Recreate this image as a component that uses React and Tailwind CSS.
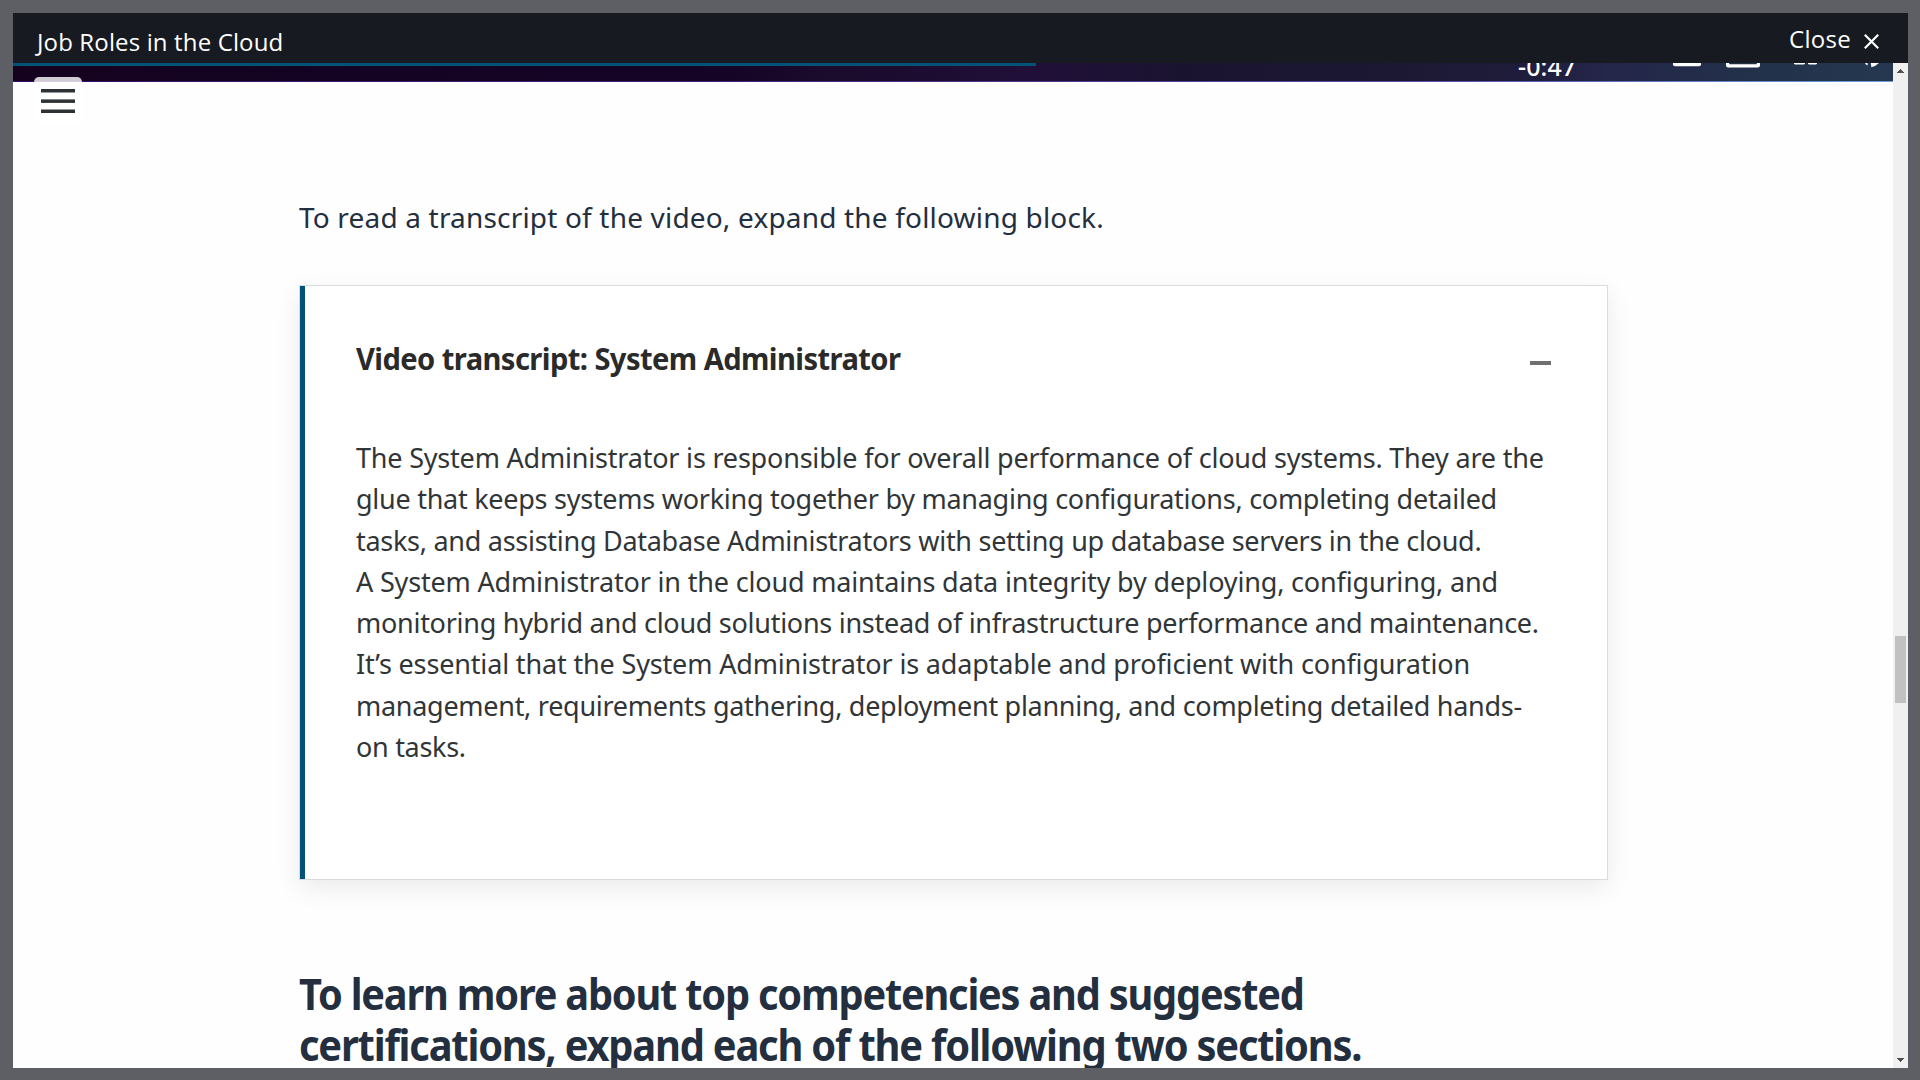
import React from 'react';

const transcript = [
  { text: 'The System Administrator is responsible for overall performance of cloud systems. They are the', track: 'tracking-[-0.2px]' },
  { text: 'glue that keeps systems working together by managing configurations, completing detailed', track: 'tracking-[-0.265px]' },
  { text: 'tasks, and assisting Database Administrators with setting up database servers in the cloud.', track: 'tracking-[-0.28px]' },
  { text: 'A System Administrator in the cloud maintains data integrity by deploying, configuring, and', track: 'tracking-[-0.17px]' },
  { text: 'monitoring hybrid and cloud solutions instead of infrastructure performance and maintenance.', track: 'tracking-[-0.275px]' },
  { text: 'It’s essential that the System Administrator is adaptable and proficient with configuration', track: 'tracking-[-0.155px]' },
  { text: 'management, requirements gathering, deployment planning, and completing detailed hands-', track: 'tracking-[-0.285px]' },
  { text: 'on tasks.', track: 'tracking-[-0.3px]' },
];

function Header() {
  return (
    <header className="flex h-[50px] shrink-0 items-start justify-between bg-[#171a20] pl-[24px] pr-[29px] font-['Open_Sans',sans-serif] text-[24px] leading-[36px] text-white">
      <h1 className="pt-[11px] tracking-[0.14px]">Job Roles in the Cloud</h1>
      <button className="flex items-start gap-[13px] pt-[8px] leading-[36px]">
        <span className="tracking-[0.3px]">Close</span>
        <svg className="mt-[13px] h-[15px] w-[15px]" viewBox="0 0 15 15" fill="none" stroke="white" strokeWidth="2.2">
          <path d="M0.8 0.8L14.2 14.2M14.2 0.8L0.8 14.2" />
        </svg>
      </button>
    </header>
  );
}

function VideoStrip() {
  return (
    <div className="relative flex h-[19px] shrink-0 overflow-hidden border-b border-[#4b2a80] bg-[linear-gradient(90deg,#14021f_0%,#150324_22%,#160426_38%,#1a0a2b_43%,#200f38_54%,#1a1330_62%,#1c1833_73%,#1f1c3b_80%,#24264a_85%,#223049_92%,#253850_100%)] [border-image:linear-gradient(90deg,#3a0a6a,#4a2a80_45%,#5a50a8_75%,#6aa0dc)_1]">
      <div className="absolute left-0 top-0 h-[3px] w-[1023px] bg-[#005276]" />
      <span className="ml-[1505px] mt-[-15px] w-[132px] shrink-0 text-[25px] font-medium leading-[36px] tracking-[0.1px] text-white">-0:47</span>
      <svg className="h-[18px] w-[243px] shrink-0" viewBox="0 0 243 18" fill="white">
        <path d="M23 0H51V1.2Q51 3.2 49 3.2H25Q23 3.2 23 1.2Z" />
        <path d="M76 0H79.2V1.3H106.8V0H110V2.2Q110 4.4 107.8 4.4H78.2Q76 4.4 76 2.2Z" />
        <path d="M144 0H155V0.8L154 1.6H145L144 0.8ZM158 0H167V0.8L166 1.6H159L158 0.8Z" />
        <path d="M215 0H217.6V2.4Q215.6 1.6 215 0ZM220.8 0H229Q226 3 221.4 4.2Z" />
      </svg>
    </div>
  );
}

function MenuButton() {
  return (
    <button className="absolute left-[21px] top-[14px] flex h-12 w-12 items-start justify-center rounded-[5px] bg-white/80 pt-[12px]">
      <svg className="h-[24px] w-[34px]" viewBox="0 0 34 24" fill="#2c3236">
        <rect y="0" width="34" height="3.5" />
        <rect y="10.4" width="34" height="3.5" />
        <rect y="20.5" width="34" height="3.5" />
      </svg>
    </button>
  );
}

function TranscriptCard() {
  return (
    <section className="mt-[47px] flex h-[595px] w-[1309px] border border-[#d9dbdc] bg-white shadow-[0_8px_24px_rgba(0,0,0,0.08)]">
      <div className="w-[5px] shrink-0 bg-[#005276]" />
      <div className="flex-1 pl-[51px] pr-[56px] pt-[53px]">
        <div className="flex h-10 items-start justify-between">
          <h2 className="origin-left scale-x-[0.971] whitespace-nowrap text-[30px] font-bold leading-10 tracking-[-0.6px] text-[#2a2a2a]">
            Video transcript: System Administrator
          </h2>
          <div className="mt-[22px] h-[4px] w-[21px] bg-[#707070]" />
        </div>
        <div className="mt-[58px] text-[27px] leading-[41.25px] text-[#313537]">
          {transcript.map((line) => (
            <p key={line.text} className={`whitespace-nowrap ${line.track}`}>{line.text}</p>
          ))}
        </div>
      </div>
    </section>
  );
}

function Scrollbar() {
  return (
    <div className="flex w-[15px] shrink-0 flex-col items-center bg-[#f0f0f0]">
      <svg className="mt-[6px] h-[4px] w-[7px] shrink-0" viewBox="0 0 7 4" fill="#505050" shapeRendering="crispEdges">
        <path d="M3 0H4V1H5V2H6V3H7V4H0V3H1V2H2V1H3Z" />
      </svg>
      <div className="mt-[563px] h-[67px] w-[11px] shrink-0 bg-[#c1c1c1]" />
      <svg className="mb-[6px] mt-auto h-[4px] w-[7px] shrink-0" viewBox="0 0 7 4" fill="#505050" shapeRendering="crispEdges">
        <path d="M0 0H7V1H6V2H5V3H4V4H3V3H2V2H1V1H0Z" />
      </svg>
    </div>
  );
}

export default function App() {
  return (
    <div className="h-screen w-screen overflow-hidden bg-[#5e5f65] pb-[12px] pl-[13px] pr-[12px] pt-[13px] font-['Noto_Sans',sans-serif]">
      <div className="flex h-full flex-col overflow-hidden bg-[#fefefe]">
        <Header />
        <div className="flex min-h-0 flex-1">
          <main className="relative flex min-w-0 flex-1 flex-col overflow-hidden">
            <VideoStrip />
            <MenuButton />
            <div className="pl-[286px] pt-[114px]">
              <p className="whitespace-nowrap text-[28px] leading-[42px] tracking-[0.18px] text-[#232f3e]">
                To read a transcript of the video, expand the following block.
              </p>
              <TranscriptCard />
              <div className="mt-[89px] whitespace-nowrap text-[43px] font-bold leading-[50.7px] tracking-[-1.3px] text-[#232f3e]">
                <p className="origin-left scale-x-[0.924]">To learn more about top competencies and suggested</p>
                <p className="origin-left scale-x-[0.927]">certifications, expand each of the following two sections.</p>
              </div>
            </div>
          </main>
          <Scrollbar />
        </div>
      </div>
    </div>
  );
}
